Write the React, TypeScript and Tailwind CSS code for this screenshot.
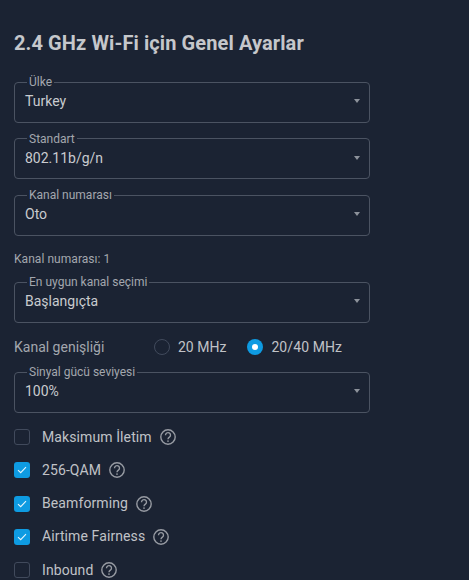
import React from 'react';

const font = { fontFamily: 'Roboto, sans-serif' };

const SelectField = ({ label, value, className = '' }: { label: string; value: string; className?: string }) => (
  <fieldset className={`relative w-[356px] h-[46.5px] rounded-[4px] border border-[#4b5362] pl-[7px] ${className}`}>
    <legend className="ml-[5px] px-[2px] text-[12px] leading-[12px] text-[#a3a7ae]">{label}</legend>
    <div className="pl-[3px] mt-[1.25px] text-[14px] leading-[24px] text-[#c9cbcf]">{value}</div>
    <svg className="absolute right-[9px] top-[11px] w-[6px] h-[4px]" viewBox="0 0 6 4">
      <path d="M0 0h6L3 4z" fill="#8d929b" />
    </svg>
  </fieldset>
);

const Help = () => (
  <svg className="w-[16px] h-[16px] shrink-0" viewBox="0 0 16 16" fill="none">
    <circle cx="8" cy="8" r="7.2" stroke="#979ba3" strokeWidth="1.4" />
    <path d="M5.5 6.2a2.5 2.5 0 1 1 3.9 2c-.9.6-1.4 1-1.4 2" stroke="#979ba3" strokeWidth="1.4" />
    <circle cx="8" cy="12.1" r=".85" fill="#979ba3" />
  </svg>
);

const Check = ({ label, checked }: { label: string; checked?: boolean }) => (
  <div className="flex items-center h-[33.25px]">
    {checked ? (
      <div className="w-[16px] h-[16px] rounded-[3px] bg-[#0e9be2] flex items-center justify-center">
        <svg className="w-[10px] h-[8px]" viewBox="0 0 10 8" fill="none">
          <path d="M1 4.2 3.7 6.7 9 1.2" stroke="#e6f5fc" strokeWidth="1.1" />
        </svg>
      </div>
    ) : (
      <div className="w-[16px] h-[16px] rounded-[3px] border border-[#414a5c]" />
    )}
    <span className="ml-[12px] mr-[8px] text-[14px] tracking-[0.1px] text-[#c0c2c7]">{label}</span>
    <Help />
  </div>
);

export default function App() {
  return (
    <div className="w-[469px] h-[580px] overflow-hidden bg-[#1b2333] pl-[14px]" style={font}>
      <h1 className="pt-[31px] text-[20px] leading-[24px] tracking-[0.1px] font-bold text-[#c5c7cb]">2.4 GHz Wi-Fi için Genel Ayarlar</h1>
      <SelectField label="Ülke" value="Turkey" className="mt-[21px]" />
      <SelectField label="Standart" value="802.11b/g/n" className="mt-[10px]" />
      <SelectField label="Kanal numarası" value="Oto" className="mt-[10px]" />
      <p className="mt-[16.5px] text-[12px] leading-[14px] tracking-[0.05px] text-[#a3a7ae]">Kanal numarası: 1</p>
      <SelectField label="En uygun kanal seçimi" value="Başlangıçta" className="mt-[10px]" />
      <div className="flex items-center h-[30px] mt-[9.5px] text-[14px] text-[#c0c2c7]">
        <span className="w-[140px] text-[#a3a7ae]">Kanal genişliği</span>
        <span className="w-[16px] h-[16px] rounded-full border border-[#414a5c]" />
        <span className="ml-[8px]">20 MHz</span>
        <span className="ml-[20.5px] w-[16px] h-[16px] rounded-full bg-[#0e9be2] flex items-center justify-center">
          <span className="w-[6px] h-[6px] rounded-full bg-white" />
        </span>
        <span className="ml-[8.5px] tracking-[0.1px]">20/40 MHz</span>
      </div>
      <SelectField label="Sinyal gücü seviyesi" value="100%" className="mt-[4px]" />
      <div className="mt-[8px]">
        <Check label="Maksimum İletim" />
        <Check label="256-QAM" checked />
        <Check label="Beamforming" checked />
        <Check label="Airtime Fairness" checked />
        <Check label="Inbound" />
      </div>
    </div>
  );
}
